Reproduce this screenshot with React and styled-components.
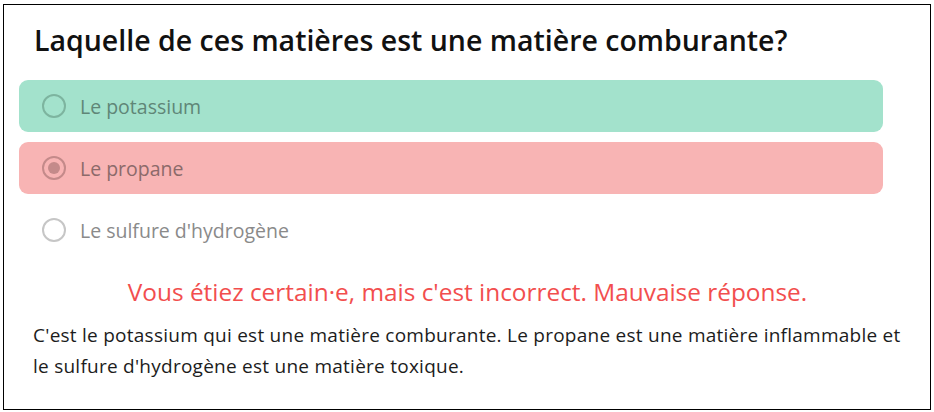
import React from 'react'
import styled, { createGlobalStyle } from 'styled-components'

const GlobalStyle = createGlobalStyle`
  html, body {
    margin: 0;
    padding: 0;
    background: #ffffff;
  }
  body {
    font-family: "Open Sans", Lato, sans-serif;
  }
`

const tones = {
  correct: { bg: '#a3e2cc', text: '#5f8677', ring: '#7db49f' },
  wrong: { bg: '#f8b4b4', text: '#8c6a6a', ring: '#c48a8a' },
  idle: { bg: 'transparent', text: '#8a8a8a', ring: '#c6c6c6' }
}

const options = [
  { label: 'Le potassium', tone: 'correct', checked: false },
  { label: 'Le propane', tone: 'wrong', checked: true },
  { label: "Le sulfure d'hydrogène", tone: 'idle', checked: false }
]

//——*——*——*——*——*——//

const App = () => {
  return (
    <>
      <GlobalStyle />
      <Card>
        <Title>Laquelle de ces matières est une matière comburante?</Title>
        <OptionList>
          {options.map(opt => (
            <Option key={opt.label} tone={opt.tone}>
              <Radio tone={opt.tone} checked={opt.checked} />
              <span>{opt.label}</span>
            </Option>
          ))}
        </OptionList>
        <Verdict>Vous étiez certain·e, mais c'est incorrect. Mauvaise réponse.</Verdict>
        <Explanation>
          C'est le potassium qui est une matière comburante. Le propane est une
          matière inflammable et le sulfure d'hydrogène est une matière toxique.
        </Explanation>
      </Card>
    </>
  )
}

const Card = styled.div`
  box-sizing: border-box;
  width: 928px;
  height: 406px;
  margin: 4px 0 0 3px;
  border: 1px solid #000;
  padding: 0 12px 0 15px;
  display: flex;
  flex-direction: column;
`

const Title = styled.h1`
  margin: 17px 0 0 15px;
  font-size: 28.5px;
  font-weight: 600;
  line-height: 36px;
  color: #111;
`

const OptionList = styled.div`
  margin: 22px 35px 0 0;
  display: flex;
  flex-direction: column;
  gap: 10px;
`

const Option = styled.div`
  height: 52px;
  border-radius: 9px;
  background: ${p => tones[p.tone].bg};
  display: flex;
  align-items: center;
  gap: 14px;
  padding-left: 23px;
  font-size: 19.5px;
  color: ${p => tones[p.tone].text};
`

const Radio = styled.span`
  box-sizing: border-box;
  width: 24px;
  height: 24px;
  border-radius: 50%;
  border: 2px solid ${p => tones[p.tone].ring};
  display: flex;
  align-items: center;
  justify-content: center;
  &::after {
    content: '';
    display: ${p => (p.checked ? 'block' : 'none')};
    width: 12px;
    height: 12px;
    border-radius: 50%;
    background: ${p => tones[p.tone].ring};
  }
`

const Verdict = styled.p`
  margin: 20px 0 0 0;
  padding: 0 34px 0 32px;
  text-align: center;
  font-size: 24.4px;
  line-height: 32px;
  color: #f24e4e;
`

const Explanation = styled.p`
  margin: 12px 0 0 14px;
  width: 878px;
  font-size: 19px;
  letter-spacing: 0.25px;
  line-height: 31px;
  color: #1c1c1c;
`

export default App
